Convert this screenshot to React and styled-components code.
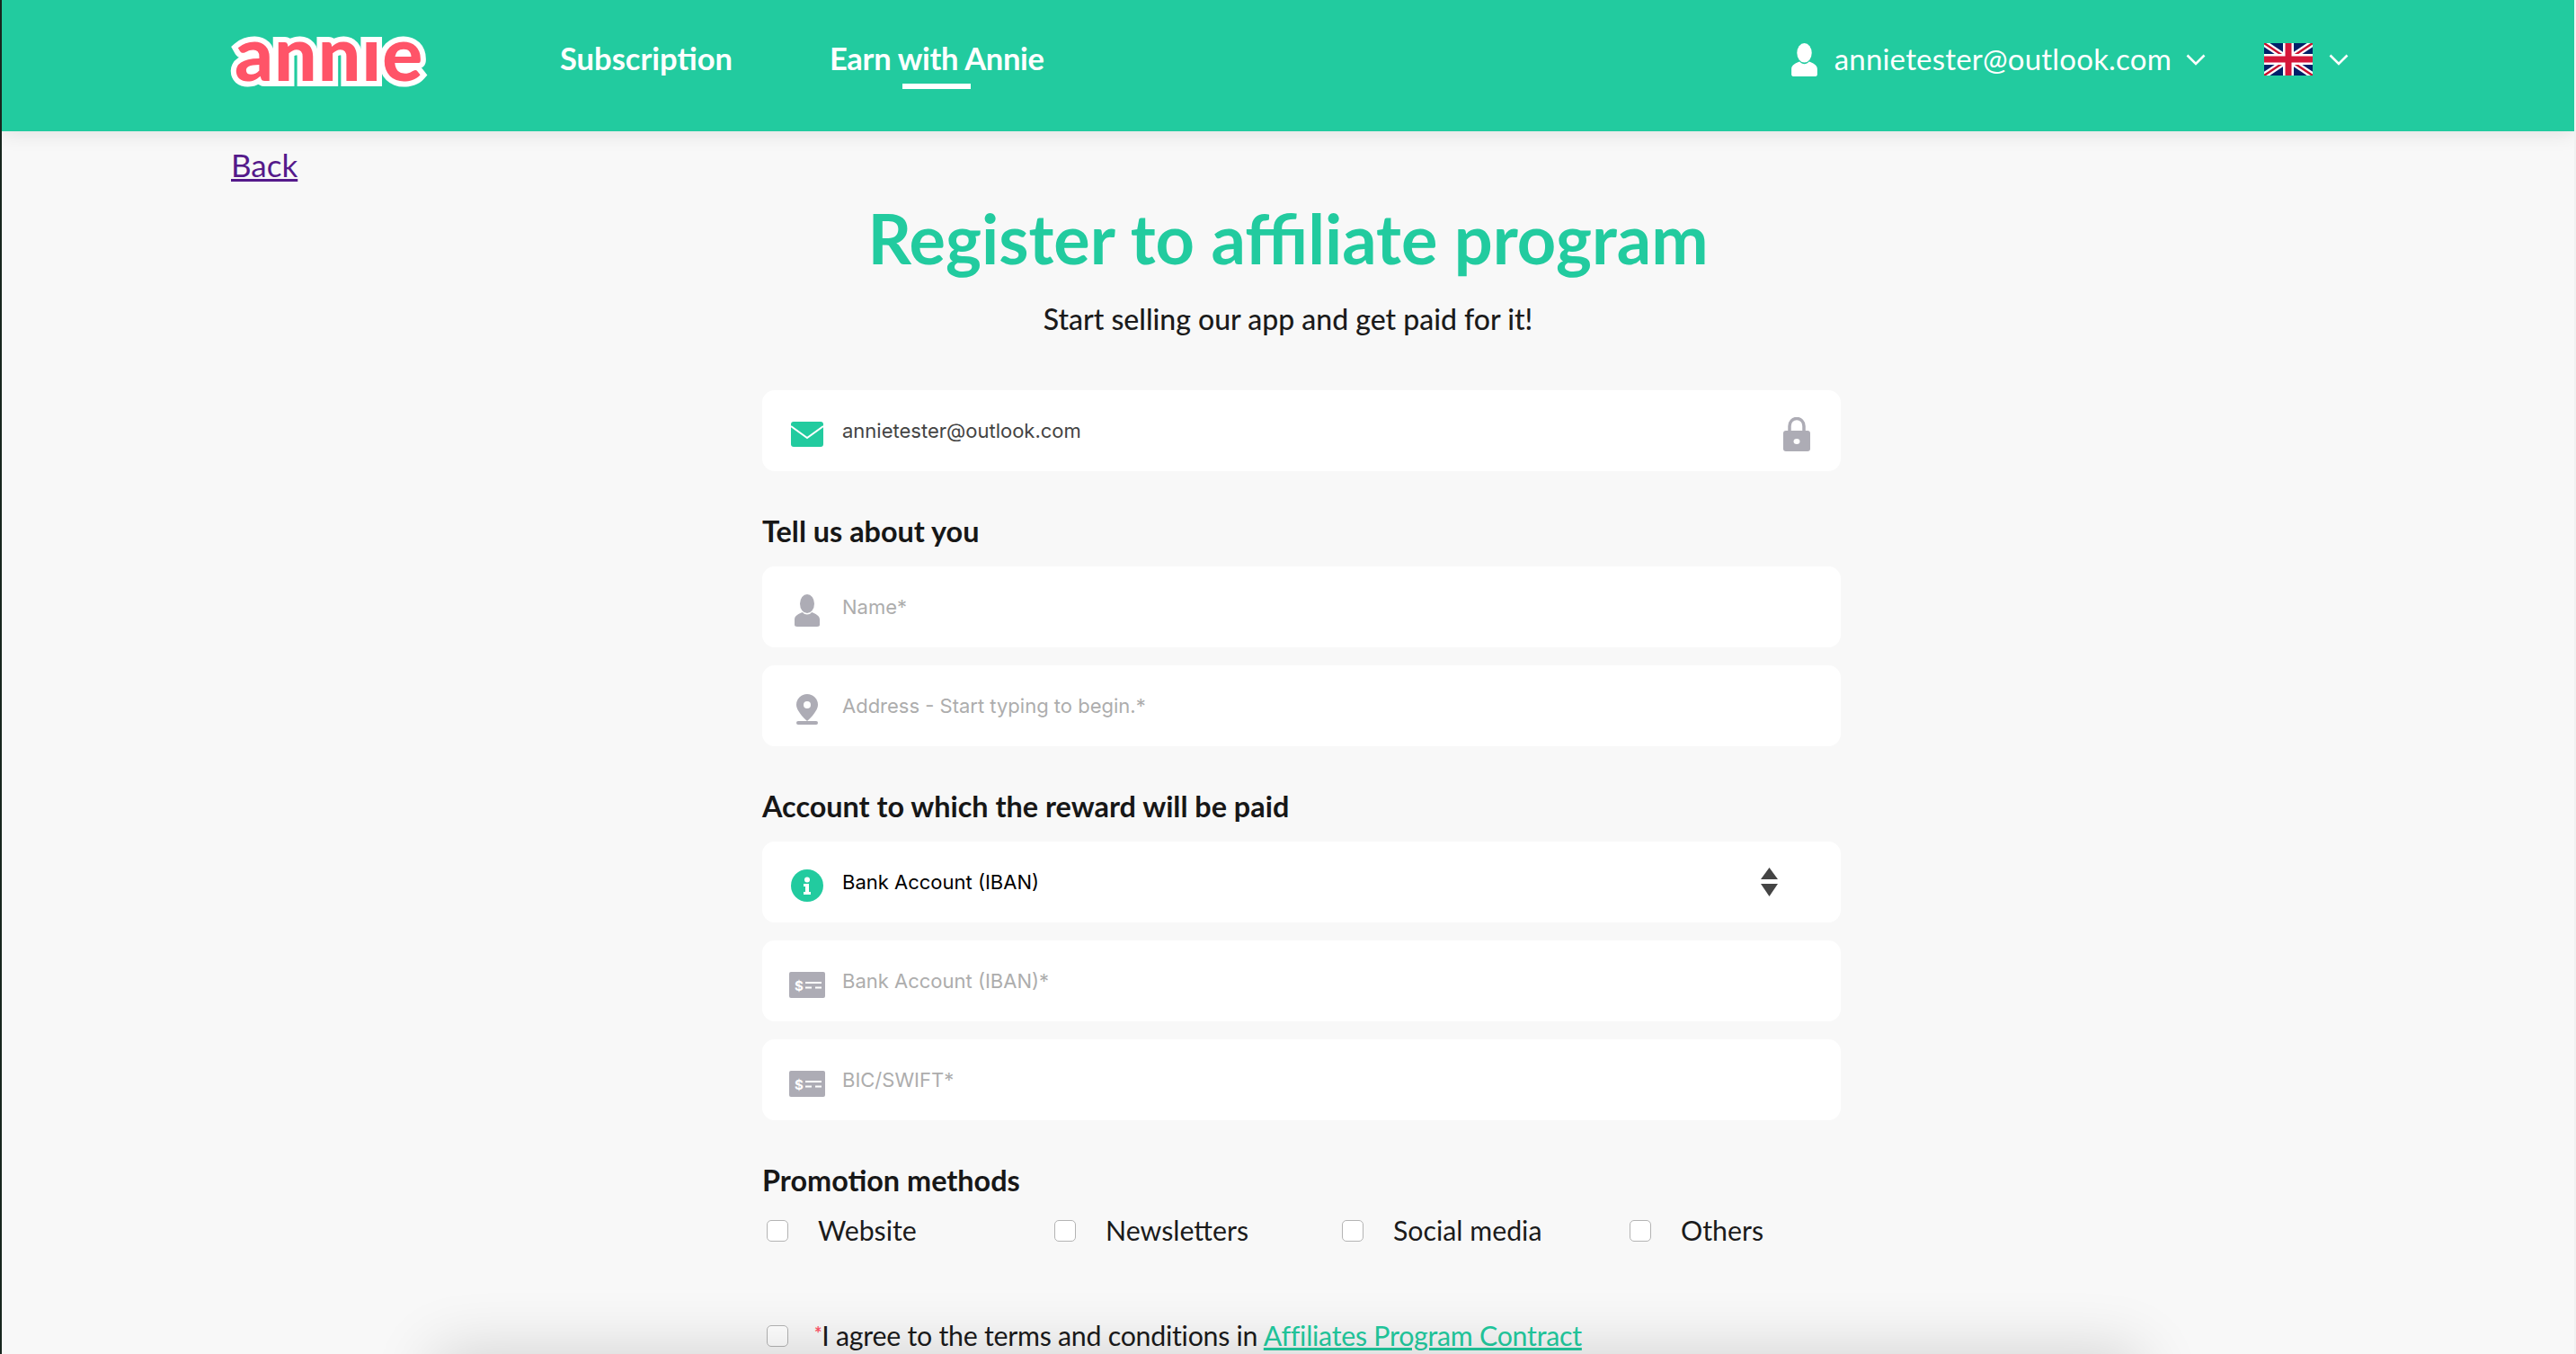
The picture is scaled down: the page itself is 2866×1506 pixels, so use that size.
import styled, { createGlobalStyle } from 'styled-components'

const GlobalStyle = createGlobalStyle`
  html, body {
    margin: 0;
    padding: 0;
    background: #f8f8f8;
    font-family: Lato, 'Liberation Sans', sans-serif;
  }
`

const green = '#22cb9f'
const grey = '#adacb5'

const Page = styled.div`
  position: relative;
  box-sizing: border-box;
  width: 2866px;
  height: 1506px;
  overflow: hidden;
  background: #f8f8f8;
  border-left: 2px solid #17261e;
  border-right: 2px solid #f1f1f1;
`

const Header = styled.header`
  display: flex;
  align-items: flex-start;
  height: 146px;
  padding-left: 255px;
  background: ${green};
  box-shadow: 0 2px 22px rgba(0, 0, 0, 0.1);
`

const Logo = styled.div`
  width: 224px;
  margin-top: 18px;
  font-family: Lato, sans-serif;
  font-weight: 900;
  font-size: 84px;
  line-height: 80px;
  letter-spacing: 1px;
  text-indent: 4px;
  color: #ff5468;
  -webkit-text-stroke: 12px #fff;
  paint-order: stroke fill;
`

const Nav = styled.nav`
  display: flex;
  gap: 108px;
  margin-left: 142px;
  padding-top: 46px;
`

const NavItem = styled.a`
  position: relative;
  font-weight: 700;
  font-size: 34.5px;
  line-height: 38px;
  color: #fff;

  ${(p) =>
    p.$active &&
    `
    letter-spacing: -0.3px;

    &::after {
      content: '';
      position: absolute;
      left: 50%;
      bottom: -15px;
      width: 76px;
      height: 6px;
      margin-left: -38px;
      background: #fff;
    }
  `}
`

const HeaderRight = styled.div`
  display: flex;
  align-items: center;
  height: 38px;
  margin-left: auto;
  margin-right: 251px;
  margin-top: 47px;
  color: #fff;
`

const Account = styled.span`
  margin: -2px 16px 0 19px;
  font-weight: 400;
  font-size: 33px;
  letter-spacing: 0.2px;
`

const Flag = styled.svg`
  display: block;
  margin: 0 18px 0 65px;
`

const Main = styled.main`
  padding-left: 255px;
`

const BackLink = styled.a`
  display: block;
  width: max-content;
  margin-top: 17px;
  font-size: 35px;
  line-height: 40px;
  color: #551a8b;
  text-decoration: underline;
`

const Title = styled.h1`
  margin: 17px 0 0 -255px;
  font-weight: 700;
  font-size: 75.7px;
  line-height: 90px;
  text-align: center;
  color: ${green};
`

const Subtitle = styled.p`
  margin: 25px 0 0 -255px;
  font-weight: 500;
  font-size: 32px;
  line-height: 40px;
  text-align: center;
  color: #1b1b1b;
`

const Form = styled.form`
  width: 1200px;
  margin: 59px 0 0 591px;
`

const Field = styled.div`
  display: flex;
  align-items: center;
  height: 90px;
  margin-bottom: 20px;
  border-radius: 14px;
  background: #fff;
  font-family: Inter, sans-serif;
  font-size: 22px;
`

const IconSlot = styled.span`
  box-sizing: border-box;
  display: flex;
  justify-content: center;
  width: 89px;
  flex: none;
  padding: 8px 0 0 11px;
`

const FieldText = styled.span`
  flex: 1;
  color: ${(p) => p.$color || '#adadad'};
`

const TrailingIcon = styled.span`
  display: flex;
  margin-right: ${(p) => p.$right}px;
  padding-top: ${(p) => p.$top}px;
`

const SectionTitle = styled.h2`
  margin: 47px 0 19px;
  font-weight: 700;
  font-size: 32.4px;
  line-height: 40px;
  color: #171717;
`

const MethodRow = styled.div`
  display: grid;
  grid-template-columns: repeat(4, 320px);
  margin-top: -2px;
`

const CheckLabel = styled.label`
  display: flex;
  align-items: center;
  font-size: 30.3px;
  line-height: 40px;
  color: #1b1b1b;
`

const MethodName = styled.span`
  margin-top: -2px;
`

const Box = styled.span`
  box-sizing: border-box;
  width: 24px;
  height: 24px;
  flex: none;
  margin: 0 ${(p) => p.$gap}px 0 5px;
  border: 1.5px solid #b4b4b4;
  border-radius: 5px;
  background: #fff;
`

const AgreeRow = styled(CheckLabel)`
  margin-top: 78px;
  letter-spacing: -0.25px;
`

const AgreeText = styled.span`
  margin-top: -3px;
`

const Star = styled.span`
  font-size: 20px;
  font-weight: 700;
  vertical-align: 6px;
  color: #ff5468;
`

const ContractLink = styled.a`
  color: ${green};
  text-decoration: underline;
`

const FooterShade = styled.div`
  position: absolute;
  left: 510px;
  top: 1532px;
  width: 1840px;
  height: 100px;
  background: #ddd;
  box-shadow: 0 0 70px 28px rgba(0, 0, 0, 0.16);
`

const PersonIcon = ({ color, width = 28, height = 36 }) => (
  <svg width={width} height={height} viewBox='0 0 28 36' fill={color}>
    <ellipse cx='14' cy='10.5' rx='8' ry='10.5' />
    <path d='M9 20c-4 1.5-9 3.500-9 8v6c0 1 1 2 3 2h22c2 0 3-1 3-2v-6c0-4.500-5-6.500-9-8-1.500 1.800-3 2.500-5 2.500s-3.500-.7-5-2.500z' />
  </svg>
)

const Chevron = () => (
  <svg width='22' height='13' viewBox='0 0 22 13' fill='none' stroke='#fff' strokeWidth='2.6'>
    <path d='M1.500 1.500L11 11l9.500-9.500' />
  </svg>
)

const UkFlag = () => (
  <Flag width='54' height='36' viewBox='0 0 54 36'>
    <rect width='54' height='36' fill='#012169' />
    <path d='M0 0L54 36M54 0L0 36' stroke='#fff' strokeWidth='7' />
    <path d='M0 0L54 36M54 0L0 36' stroke='#c8102e' strokeWidth='2.400' />
    <path d='M27 0V36M0 18H54' stroke='#fff' strokeWidth='12' />
    <path d='M27 0V36M0 18H54' stroke='#d5173a' strokeWidth='7' />
  </Flag>
)

const MailIcon = () => (
  <svg width='36' height='28' viewBox='0 0 36 28'>
    <rect width='36' height='28' rx='3' fill={green} />
    <path d='M0 5l18 13L36 5' fill='none' stroke='#fff' strokeWidth='2' />
  </svg>
)

const PinIcon = () => (
  <svg width='24' height='34' viewBox='0 0 24 34' fill={grey}>
    <path d='M12 0C5.400 0 0 5.200 0 11.700 0 18 7 25.500 12 30c5-4.500 12-12 12-18.300C24 5.200 18.600 0 12 0z' />
    <circle cx='12' cy='12' r='4' fill='#fff' />
    <rect y='30' width='24' height='4' rx='2' />
  </svg>
)

const InfoIcon = () => (
  <svg width='36' height='36' viewBox='0 0 36 36'>
    <circle cx='18' cy='18' r='18' fill={green} />
    <circle cx='18' cy='11.500' r='3' fill='#fff' />
    <path d='M14 16h6v9h2v3h-8v-3h2v-6h-2z' fill='#fff' />
  </svg>
)

const CardIcon = () => (
  <svg width='40' height='29' viewBox='0 0 40 29'>
    <rect width='40' height='29' rx='2' fill={grey} />
    <text x='6' y='20.500' fontFamily='Inter, sans-serif' fontWeight='700' fontSize='15' fill='#fff'>
      $
    </text>
    <path d='M18 12h18M18 17.500h7M29 17.500h7' stroke='#fff' strokeWidth='2' />
  </svg>
)

const LockIcon = () => (
  <svg width='30' height='38' viewBox='0 0 30 38'>
    <path d='M7 17v-7c0-5 3.500-8.500 8-8.500s8 3.500 8 8.500v7' fill='none' stroke={grey} strokeWidth='3.500' />
    <rect y='15' width='30' height='23' rx='3' fill={grey} />
    <ellipse cx='15' cy='27' rx='3.500' ry='3' fill='#fff' />
  </svg>
)

const SortIcon = () => (
  <svg width='19' height='32' viewBox='0 0 19 32' fill='#444'>
    <path d='M9.500 0L19 13H0z' />
    <path d='M0 18h19L9.500 32z' />
  </svg>
)

const App = () => {
  const methods = ['Website', 'Newsletters', 'Social media', 'Others']

  return (
    <Page>
      <GlobalStyle />
      <Header>
        <Logo>annıe</Logo>
        <Nav>
          <NavItem>Subscription</NavItem>
          <NavItem $active>Earn with Annie</NavItem>
        </Nav>
        <HeaderRight>
          <PersonIcon color='#fff' width={29} height={37} />
          <Account>annietester@outlook.com</Account>
          <Chevron />
          <UkFlag />
          <Chevron />
        </HeaderRight>
      </Header>

      <Main>
        <BackLink>Back</BackLink>
        <Title>Register to affiliate program</Title>
        <Subtitle>Start selling our app and get paid for it!</Subtitle>

        <Form>
          <Field>
            <IconSlot>
              <MailIcon />
            </IconSlot>
            <FieldText $color='#444'>annietester@outlook.com</FieldText>
            <TrailingIcon $right={34} $top={8}>
              <LockIcon />
            </TrailingIcon>
          </Field>

          <SectionTitle>Tell us about you</SectionTitle>
          <Field>
            <IconSlot>
              <PersonIcon color={grey} />
            </IconSlot>
            <FieldText>Name*</FieldText>
          </Field>
          <Field>
            <IconSlot>
              <PinIcon />
            </IconSlot>
            <FieldText>Address - Start typing to begin.*</FieldText>
          </Field>

          <SectionTitle>Account to which the reward will be paid</SectionTitle>
          <Field>
            <IconSlot>
              <InfoIcon />
            </IconSlot>
            <FieldText $color='#000'>Bank Account (IBAN)</FieldText>
            <TrailingIcon $right={70} $top={0}>
              <SortIcon />
            </TrailingIcon>
          </Field>
          <Field>
            <IconSlot>
              <CardIcon />
            </IconSlot>
            <FieldText>Bank Account (IBAN)*</FieldText>
          </Field>
          <Field>
            <IconSlot>
              <CardIcon />
            </IconSlot>
            <FieldText>BIC/SWIFT*</FieldText>
          </Field>

          <SectionTitle>Promotion methods</SectionTitle>
          <MethodRow>
            {methods.map((method) => (
              <CheckLabel key={method}>
                <Box $gap={33} />
                <MethodName>{method}</MethodName>
              </CheckLabel>
            ))}
          </MethodRow>
          <AgreeRow>
            <Box $gap={29} />
            <AgreeText>
              <Star>*</Star>I agree to the terms and conditions in{' '}
              <ContractLink>Affiliates Program Contract</ContractLink>
            </AgreeText>
          </AgreeRow>
        </Form>
      </Main>
      <FooterShade />
    </Page>
  )
}

export default App
